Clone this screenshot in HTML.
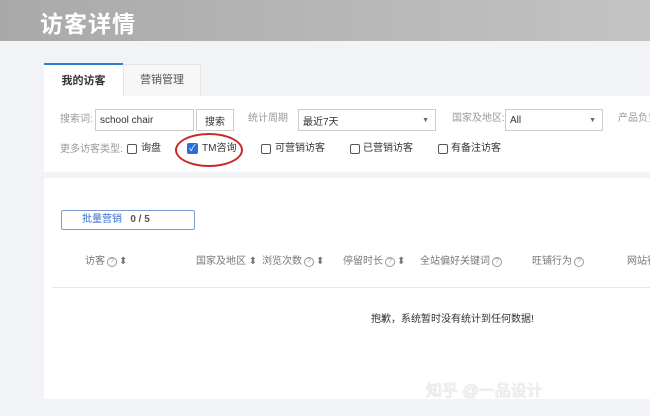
<!DOCTYPE html>
<html><head><meta charset="utf-8"><style>
*{margin:0;padding:0;box-sizing:border-box}
body{width:650px;height:416px;overflow:hidden;background:#f2f3f6;font-family:"Liberation Sans","Noto Sans CJK SC",sans-serif;position:relative;font-size:10px;color:#555}
.hd{position:absolute;left:0;top:0;width:650px;height:41px;background:linear-gradient(90deg,#a9a9a9,#c3c3c3);}
.hd span{position:absolute;left:40px;top:5px;font-size:23px;font-weight:bold;color:#fff;letter-spacing:1px}
.a{position:absolute}
.tab1{left:44px;top:63px;width:79px;height:34px;background:#fff;border-top:2px solid #2a7fd0;font-weight:bold;color:#333;font-size:11px;text-align:center;line-height:32px}
.tab2{left:123px;top:64px;width:78px;height:33px;background:#f7f7f7;border:1px solid #e3e3e3;border-bottom:none;color:#555;font-size:11px;text-align:center;line-height:31px}
.p1{left:44px;top:96px;width:606px;height:76px;background:#fff}
.p2{left:44px;top:178px;width:606px;height:221px;background:#fff}
.lbl{color:#999;font-size:10px;line-height:12px}
.inp{border:1px solid #ccc;background:#fff;height:22px;font-size:10px;color:#333;display:flex;align-items:center;padding-left:4px}
.cb{width:10px;height:10px;border:1px solid #555;border-radius:2px;background:#fff}
.t{color:#333;font-size:10px;line-height:12px}
.th{color:#777;font-size:10px;top:256px;line-height:12px;display:flex;align-items:center;gap:2px;white-space:nowrap}
.q{display:inline-block;width:10px;height:10px;border:1px solid #999;border-radius:50%;font-size:7px;line-height:8px;text-align:center;color:#999}
</style></head><body>
<div class="hd"><span>访客详情</span></div>
<div class="a tab2">营销管理</div>
<div class="a p1"></div>
<div class="a tab1">我的访客</div>
<div class="a p2"></div>

<div class="a lbl" style="left:60px;top:114px">搜索词:</div>
<div class="a inp" style="left:95px;top:109px;width:99px">school chair</div>
<div class="a inp" style="left:196px;top:109px;width:38px;justify-content:center;padding:0">搜索</div>
<div class="a lbl" style="left:248px;top:113px">统计周期</div>
<div class="a inp" style="left:298px;top:109px;width:138px">最近7天<span style="position:absolute;right:6px;font-size:7px;color:#666">▼</span></div>
<div class="a lbl" style="left:452px;top:113px">国家及地区:</div>
<div class="a inp" style="left:505px;top:109px;width:98px">All<span style="position:absolute;right:6px;font-size:7px;color:#666">▼</span></div>
<div class="a lbl" style="left:618px;top:113px;white-space:nowrap">产品负责</div>

<div class="a lbl" style="left:60px;top:144px">更多访客类型:</div>
<div class="a cb" style="left:127px;top:144px"></div><div class="a t" style="left:141px;top:143px">询盘</div>
<div class="a" style="left:187px;top:143px;width:11px;height:11px;background:#2a6fd6;border-radius:2px;color:#fff;font-size:9px;line-height:11px;text-align:center">✓</div>
<div class="a t" style="left:202px;top:143px">TM咨询</div>
<div class="a" style="left:175px;top:133px;width:68px;height:34px;border:2px solid #c8282a;border-radius:50%"></div>
<div class="a cb" style="left:261px;top:144px"></div><div class="a t" style="left:275px;top:143px">可营销访客</div>
<div class="a cb" style="left:350px;top:144px"></div><div class="a t" style="left:363px;top:143px">已营销访客</div>
<div class="a cb" style="left:438px;top:144px"></div><div class="a t" style="left:451px;top:143px">有备注访客</div>

<div class="a" style="left:61px;top:210px;width:134px;height:20px;border:1px solid #7b9bd0;border-radius:2px;color:#3b6fd0;font-size:10px;line-height:18px;padding-left:20px">批量营销 &nbsp; <b style="color:#555">0 / 5</b></div>

<div class="a th" style="left:85px">访客 <span class="q">?</span> ⬍</div>
<div class="a th" style="left:196px">国家及地区 ⬍</div>
<div class="a th" style="left:262px">浏览次数 <span class="q">?</span> ⬍</div>
<div class="a th" style="left:343px">停留时长 <span class="q">?</span> ⬍</div>
<div class="a th" style="left:420px">全站偏好关键词 <span class="q">?</span></div>
<div class="a th" style="left:532px">旺铺行为 <span class="q">?</span></div>
<div class="a th" style="left:627px">网站行</div>
<div class="a" style="left:52px;top:287px;width:598px;height:1px;background:#e6e6e6"></div>
<div class="a t" style="left:371px;top:314px">抱歉，系统暂时没有统计到任何数据!</div>
<div class="a" style="left:426px;top:377px;font-size:16px;color:#f4f4f4;text-shadow:0 0 1px #aaa">知乎 @一品设计</div>
</body></html>
